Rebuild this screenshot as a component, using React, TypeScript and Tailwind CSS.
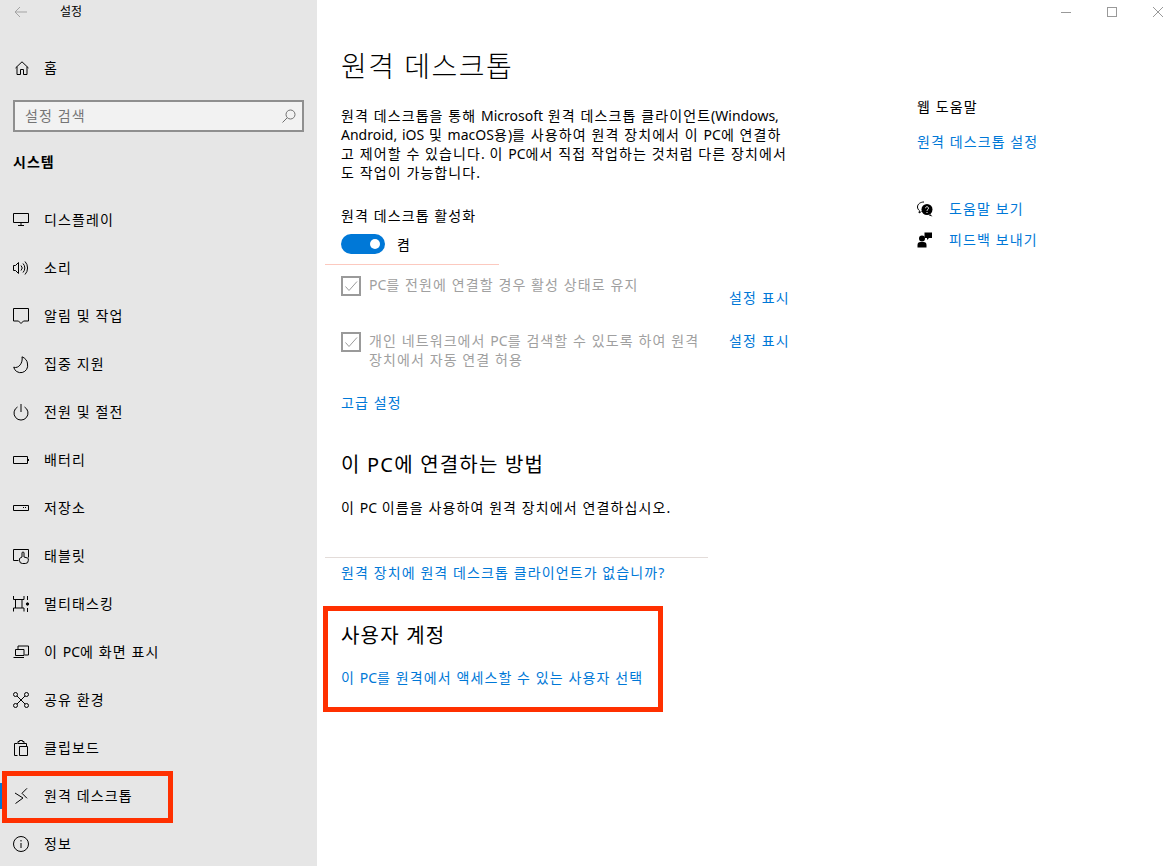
import type { ReactNode } from "react";

const stroke = { fill: "none", stroke: "currentColor", strokeWidth: 1 };

function Icon({ children }: { children: ReactNode }) {
  return (
    <svg width="16" height="16" viewBox="0 0 16 16" className="shrink-0 overflow-visible text-black" {...stroke}>
      {children}
    </svg>
  );
}

// hangul runs carry the page tracking, latin runs stay at normal width
function Txt({ children }: { children: string }) {
  const parts = children.split(/([A-Za-z0-9(),.?]+)/);
  return (
    <>
      {parts.map((part, i) =>
        i % 2 === 1 ? (
          <span key={i} className="tracking-normal">
            {part}
          </span>
        ) : (
          part
        ),
      )}
    </>
  );
}

const navItems: { label: string; icon: ReactNode }[] = [
  {
    label: "디스플레이",
    icon: <path d="M.5 1.500h15v9H.5zM8 10.500v3M5 13.500h6" />,
  },
  {
    label: "소리",
    icon: <path d="M.5 5.500h2l3-3v11l-3-3h-2zM8 5.500a3.500 3.500 0 0 1 0 5M10 3.500a6.500 6.500 0 0 1 0 9M12 1.500a9.500 9.500 0 0 1 0 13" />,
  },
  {
    label: "알림 및 작업",
    icon: <path d="M.5 .5h15v12.500h-5l-2.500 2.500-2.500-2.500h-5z" />,
  },
  {
    label: "집중 지원",
    icon: <path d="M9 .8c3.300 1.300 5.500 4 5.500 7.200a7 7 0 0 1-13.800 3.200c5 1.800 9.500-4.500 8.300-10.400z" />,
  },
  {
    label: "전원 및 절전",
    icon: <path d="M4.500 3a7 7 0 1 0 7 0M8 0v8" />,
  },
  {
    label: "배터리",
    icon: <path d="M.5 4.500h14v7H.5zM15.500 7v2" />,
  },
  {
    label: "저장소",
    icon: <path d="M.5 5.500h15v5H.5zM10 7.500h1M12 7.500h1" />,
  },
  {
    label: "태블릿",
    icon: <path d="M5.500 12.500H.5v-11h15v8M9 9V5a1 1 0 0 1 2 0v4l3.500 1a1 1 0 0 1 .8 1v1.500a3 3 0 0 1-3 3H9.500a3 3 0 0 1-3-3V10.500L9 9" />,
  },
  {
    label: "멀티태스킹",
    icon: (
      <>
        <path d="M.5 0v3.500h10.500V0M.5 15.500V12h10.500v3.500M2.500 3.500V12M9 3.500V12M14.500 0v4M14.500 12v4" />
        <circle cx="14.500" cy="8" r="1.200" fill="currentColor" />
      </>
    ),
  },
  {
    label: "이 PC에 화면 표시",
    icon: <path d="M5 5V2h10.500v9h-4M2.500 5.500h8.500v6H2.500zM.5 13.500h10.500" />,
  },
  {
    label: "공유 환경",
    icon: (
      <>
        <circle cx="2.500" cy="2.500" r="2" />
        <circle cx="13.500" cy="2.500" r="2" />
        <circle cx="2.500" cy="13.500" r="2" />
        <circle cx="13.500" cy="13.500" r="2" />
        <path d="M4 4l8 8M12 4l-8 8" />
      </>
    ),
  },
  {
    label: "클립보드",
    icon: <path d="M4.500 15.500h-3v-12h3M10.500 3.500h3v3M5 3.500V1.500h1.500V.5h3v1H11v2zM6.500 6.500h8v9h-8z" />,
  },
  {
    label: "원격 데스크톱",
    icon: <path d="M2 5l8 5-7.500 5.500M14 .3l-5 5 5 5" />,
  },
  {
    label: "정보",
    icon: (
      <>
        <circle cx="8" cy="8" r="7.500" />
        <path d="M8 7v5M8 4v1.500" />
      </>
    ),
  },
];

function Sidebar() {
  return (
    <aside className="relative w-[317px] shrink-0 overflow-hidden bg-[#e6e6e6] text-black">
      <div className="flex h-[24px] items-center">
        <svg width="14" height="12" viewBox="0 0 14 12" className="ml-[14px] text-[#a3a3a3]" {...stroke}>
          <path d="M13 6H1M6 1 1 6l5 5" />
        </svg>
        <span className="ml-[32px] text-[12px] tracking-normal">설정</span>
      </div>

      <div className="mt-[20px] flex h-[48px] items-center pl-[15px]">
        <svg width="14" height="14" viewBox="0 0 14 14" className="shrink-0" {...stroke}>
          <path d="M.5 7 7 .8 13.500 7M2 5.800v7.700h3.500V8.500h3v5H12V5.800" />
        </svg>
        <span className="mb-[2px] ml-[15px] text-[14px]">홈</span>
      </div>

      <div className="mx-[13px] mt-[8px] flex h-[32px] items-center justify-between border-2 border-[#8f8f8f] bg-[#f2f2f2] pl-[10px] pr-[6px]">
        <span className="mb-[2px] text-[14px] text-[#757575]">설정 검색</span>
        <svg width="14" height="14" viewBox="0 0 14 14" className="text-[#707070]" {...stroke}>
          <circle cx="8.500" cy="5.500" r="4.500" />
          <path d="M5.200 8.800.5 13.500" />
        </svg>
      </div>

      <div className="mt-[18px] pl-[13px] text-[14px] leading-[24px] font-bold tracking-[1px]">시스템</div>

      <nav className="mt-[22px]">
        {navItems.map((item) => (
          <div key={item.label} className="relative flex h-[48px] items-center gap-[15px] pl-[13px] text-[14px]">
            {item.label === "원격 데스크톱" && <div className="absolute left-0 top-[11px] h-[26px] w-[3px] bg-[#0078d7]" />}
            <Icon>{item.icon}</Icon>
            <span className="mb-[2px]">
              <Txt>{item.label}</Txt>
            </span>
          </div>
        ))}
      </nav>
    </aside>
  );
}

function CheckBox() {
  return (
    <svg width="20" height="20" viewBox="0 0 20 20" className="shrink-0 text-[#9a9a9a]" fill="none" stroke="currentColor">
      <rect x="1" y="1" width="18" height="18" strokeWidth="2" />
      <path d="M4.500 10.500 8 14.500l8-9" strokeWidth="1" />
    </svg>
  );
}

function Link({ children, className = "" }: { children: string; className?: string }) {
  return (
    <div className={`text-[14px] leading-[20px] text-[#0078d7] ${className}`}>
      <Txt>{children}</Txt>
    </div>
  );
}

export default function App() {
  return (
    <div className="relative flex h-screen w-full overflow-hidden bg-white font-['Noto_Sans','Noto_Sans_CJK_KR',sans-serif] tracking-[1.1px] text-black">
      <Sidebar />

      <main className="min-w-0 flex-1">
        <div className="flex h-[24px] items-center justify-end gap-[36px] pr-[12px] text-[#999999]">
          <div className="h-px w-[10px] bg-[#999999]" />
          <div className="h-[10px] w-[10px] border border-[#999999]" />
          <svg width="10" height="10" viewBox="0 0 10 10" {...stroke}>
            <path d="M0 0l10 10M10 0 0 10" />
          </svg>
        </div>

        <div className="flex">
          <div className="w-[600px] shrink-0 pl-[24px]">
            <h1 className="mt-[22px] text-[28px] leading-[40px] font-light tracking-[1.5px]">원격 데스크톱</h1>
            <p className="mt-[20px] text-[14px] leading-[19px]">
              <Txt>원격 데스크톱을 통해 Microsoft 원격 데스크톱 클라이언트(Windows,</Txt>
              <br />
              <Txt>Android, iOS 및 macOS용)를 사용하여 원격 장치에서 이 PC에 연결하</Txt>
              <br />
              <Txt>고 제어할 수 있습니다. 이 PC에서 직접 작업하는 것처럼 다른 장치에서</Txt>
              <br />
              <Txt>도 작업이 가능합니다.</Txt>
            </p>

            <div className="mt-[24px] text-[14px] leading-[20px]">원격 데스크톱 활성화</div>
            <div className="mt-[8px] flex items-start gap-[12px]">
              <div className="flex h-[20px] w-[44px] items-center justify-end rounded-full bg-[#0078d7] pr-[5px]">
                <div className="h-[10px] w-[10px] rounded-full bg-white" />
              </div>
              <span className="pt-[1px] text-[14px] leading-[20px]">켬</span>
            </div>
            <div className="-ml-[16px] mt-[9px] h-px w-[174px] bg-[#fcc9bf]" />

            <div className="mt-[11px] flex h-[32px]">
              <CheckBox />
              <div className="-mt-px ml-[8px] w-[360px] text-[14px] leading-[19px] text-[#a0a0a0]">
                <Txt>PC를 전원에 연결할 경우 활성 상태로 유지</Txt>
              </div>
              <Link className="mt-[12px]">설정 표시</Link>
            </div>
            <div className="mt-[24px] flex">
              <CheckBox />
              <div className="-mt-px ml-[8px] w-[360px] text-[14px] leading-[19px] text-[#a0a0a0]">
                <Txt>개인 네트워크에서 PC를 검색할 수 있도록 하여 원격</Txt>
                <br />
                장치에서 자동 연결 허용
              </div>
              <Link className="-mt-px">설정 표시</Link>
            </div>

            <Link className="mt-[24px]">고급 설정</Link>

            <h2 className="mt-[38px] text-[20px] leading-[28px] tracking-[1.2px]">이 PC에 연결하는 방법</h2>
            <div className="mt-[19px] text-[14px] leading-[20px]">
              <Txt>이 PC 이름을 사용하여 원격 장치에서 연결하십시오.</Txt>
            </div>
            <div className="-ml-[16px] mt-[39px] h-px w-[383px] bg-[#e3dcd9]" />
            <Link className="mt-[5px]">원격 장치에 원격 데스크톱 클라이언트가 없습니까?</Link>

            <h2 className="mt-[39px] text-[20px] leading-[28px] tracking-[1.2px]">사용자 계정</h2>
            <Link className="mt-[18px]">이 PC를 원격에서 액세스할 수 있는 사용자 선택</Link>
          </div>

          <div className="pt-[73px]">
            <div className="text-[14px] leading-[20px]">웹 도움말</div>
            <Link className="mt-[15px]">원격 데스크톱 설정</Link>

            <div className="mt-[47px] flex items-center gap-[16px]">
              <svg width="16" height="16" viewBox="0 0 16 16" className="shrink-0">
                <path d="M7 1C3.500 1 .5 3 .5 6c0 1.500.8 2.800 2 3.700L2 12l2.500-1.500" fill="none" stroke="black" />
                <circle cx="10" cy="8.500" r="5.500" fill="black" />
                <path d="M13 13l2.500 2.500-3.500-1z" fill="black" />
                <path d="M8.500 7.200a1.500 1.500 0 1 1 2.300 1.300c-.6.400-.8.700-.8 1.300M10 11v1" fill="none" stroke="white" />
              </svg>
              <Link>도움말 보기</Link>
            </div>
            <div className="mt-[11px] flex items-center gap-[16px]">
              <svg width="16" height="16" viewBox="0 0 16 16" className="shrink-0">
                <circle cx="5" cy="6.500" r="3" fill="black" />
                <path d="M.5 15.500v-2.500a3 3 0 0 1 3-3h3a3 3 0 0 1 3 3v2.500z" fill="black" />
                <path d="M7.500 .5h7.500v5.500h-3l-2 2v-2h-2.500z" fill="black" />
              </svg>
              <Link>피드백 보내기</Link>
            </div>
          </div>
        </div>
      </main>

      {/* red callouts drawn over the screenshot */}
      <div className="pointer-events-none absolute left-[2px] top-[771px] h-[52px] w-[171px] border-[5px] border-[#ff3000]" />
      <div className="pointer-events-none absolute left-[323px] top-[606px] h-[106px] w-[340px] border-[5px] border-[#ff3000]" />
    </div>
  );
}
